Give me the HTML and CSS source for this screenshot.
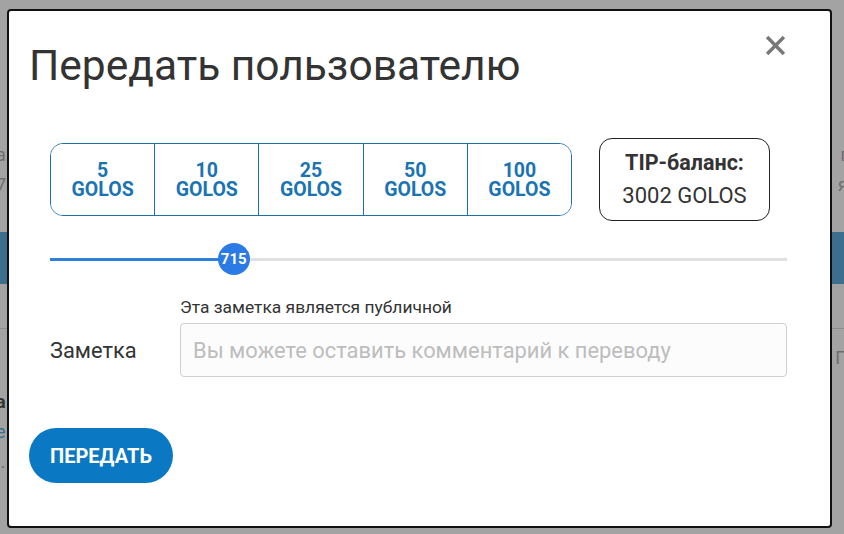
FILE: index.html
```html
<!DOCTYPE html>
<html lang="ru">
<head>
  <meta charset="UTF-8">
  <meta name="viewport" content="width=device-width, initial-scale=1.0">
  <title>Передать пользователю</title>
  <link rel="stylesheet" href="styles.css">
</head>
<body>
  <!-- Page behind the overlay -->
  <div class="page">
    <div class="page-row row-a"><span class="frag-l">а</span><span class="frag-r">г</span></div>
    <div class="page-row row-b"><span class="frag-l">7</span><span class="frag-r">я</span></div>
    <div class="page-band"></div>
    <div class="page-line"></div>
    <div class="page-row row-c"><span class="frag-l"></span><span class="frag-r">П</span></div>
    <div class="page-row row-d"><span class="frag-l bold">а</span><span></span></div>
    <div class="page-row row-e"><span class="frag-l link">е</span><span></span></div>
    <div class="page-row row-f"><span class="frag-l">..</span><span></span></div>
  </div>

  <!-- Transfer modal -->
  <div class="modal">
    <div class="modal-head">
      <h1>Передать пользователю</h1>
      <button class="close" type="button" aria-label="Закрыть">
        <svg width="21" height="21" viewBox="0 0 20 20"><path d="M2 2 L18 18 M18 2 L2 18" stroke="#787878" stroke-width="3.3" stroke-linecap="butt"/></svg>
      </button>
    </div>

    <div class="amounts">
      <div class="presets">
        <button type="button">5<br>GOLOS</button>
        <button type="button">10<br>GOLOS</button>
        <button type="button">25<br>GOLOS</button>
        <button type="button">50<br>GOLOS</button>
        <button type="button">100<br>GOLOS</button>
      </div>
      <div class="balance">
        <div class="balance-title">TIP-баланс:</div>
        <div class="balance-value">3002 GOLOS</div>
      </div>
    </div>

    <div class="slider">
      <div class="slider-track">
        <div class="slider-fill" style="width: 23.8%"></div>
        <div class="slider-thumb" style="left: calc(16px + 23.8% * (737 - 32) / 737)">715</div>
      </div>
    </div>

    <div class="note-hint">Эта заметка является публичной</div>
    <div class="note-row">
      <label for="note">Заметка</label>
      <input id="note" type="text" placeholder="Вы можете оставить комментарий к переводу">
    </div>

    <button class="submit" type="button">Передать</button>
  </div>
</body>
</html>
```

FILE: styles.css
```css
body {
  margin: 0;
  font-family: Roboto, "Noto Sans", sans-serif;
  background: #a3a3a3;
  width: 844px;
  height: 534px;
  overflow: hidden;
  position: relative;
}
.page {
  padding-top: 140px;
  color: #6e6e6e;
  font-size: 18px;
}
.page-row {
  display: flex;
  justify-content: space-between;
  height: 30px;
  line-height: 30px;
}
.frag-l {
  margin-left: -4px;
}
.frag-r {
  margin-right: -4px;
}
.page-band {
  height: 52px;
  margin-top: 32px;
  background: #3c6e8e;
}
.page-line {
  height: 1px;
  margin-top: 44px;
  background: #8d8d8d;
}
.row-c {
  margin-top: 14px;
}
.row-d {
  margin-top: 14px;
}
.bold {
  font-weight: bold;
  color: #333;
}
.link {
  color: #3c6e8e;
}

.modal {
  position: absolute;
  left: 7px;
  top: 9px;
  width: 759px;
  height: 515px;
  border: 2px solid #111;
  border-radius: 4px;
  background: #fff;
  padding: 0 42px 0 20px;
}
.modal-head {
  display: flex;
  justify-content: space-between;
  align-items: flex-start;
  padding-top: 30px;
}
.modal-head h1 {
  margin: 0;
  font-size: 42.5px;
  font-weight: 400;
  line-height: 50px;
  color: #333;
}
.close {
  border: 0;
  background: none;
  padding: 0;
  margin: -6px 2px 0 0;
  cursor: pointer;
}

.amounts {
  display: flex;
  align-items: center;
  gap: 27px;
  margin: 47px 0 0 21px;
}
.presets {
  display: flex;
  width: 522px;
  height: 73px;
  border: 1px solid #1b70a8;
  border-radius: 13px;
  overflow: hidden;
  box-sizing: border-box;
}
.presets button {
  flex: 1;
  border: 0;
  border-left: 1.5px solid #1b70a8;
  background: #fff;
  color: #1a74b4;
  font-family: inherit;
  font-size: 19.5px;
  font-weight: 700;
  line-height: 19.5px;
  padding: 1px 0 0;
}
.presets button:first-child {
  border-left: 0;
}
.balance {
  width: 171px;
  height: 83px;
  box-sizing: border-box;
  border: 1px solid #222;
  border-radius: 13px;
  text-align: center;
  color: #333;
  padding-top: 11px;
}
.balance-title {
  font-size: 21.5px;
  font-weight: 700;
  line-height: 26px;
}
.balance-value {
  font-size: 22px;
  line-height: 26px;
  margin-top: 7px;
}

.slider {
  margin: 22px 0 0 21px;
  height: 32px;
  display: flex;
  align-items: center;
}
.slider-track {
  position: relative;
  width: 737px;
  height: 3px;
  background: #e0e0e0;
}
.slider-fill {
  height: 3px;
  background: #2f7fdc;
}
.slider-thumb {
  position: absolute;
  top: -15px;
  width: 32px;
  height: 32px;
  margin-left: -16px;
  border-radius: 50%;
  background: #2b7ae6;
  color: #fff;
  font-size: 15px;
  font-weight: 700;
  line-height: 32px;
  text-align: center;
}

.note-hint {
  margin: 22px 0 0 151px;
  font-size: 17.4px;
  line-height: 20px;
  color: #333;
}
.note-row {
  display: flex;
  align-items: center;
  margin: 6px 0 0 21px;
}
.note-row label {
  width: 130px;
  font-size: 21.8px;
  color: #333;
}
.note-row input {
  width: 607px;
  height: 54px;
  box-sizing: border-box;
  border: 1px solid #cfcfcf;
  border-radius: 4px;
  background: #fcfcfc;
  padding: 0 12px;
  font-family: inherit;
  font-size: 21.9px;
  color: #333;
}
.note-row input::placeholder {
  color: #bdbdbd;
}

.submit {
  display: block;
  margin: 51px 0 0 0;
  width: 144px;
  height: 55px;
  border: 0;
  border-radius: 28px;
  background: #0b78c3;
  color: #fff;
  font-family: inherit;
  font-size: 20px;
  font-weight: 700;
  text-transform: uppercase;
  cursor: pointer;
}
```
